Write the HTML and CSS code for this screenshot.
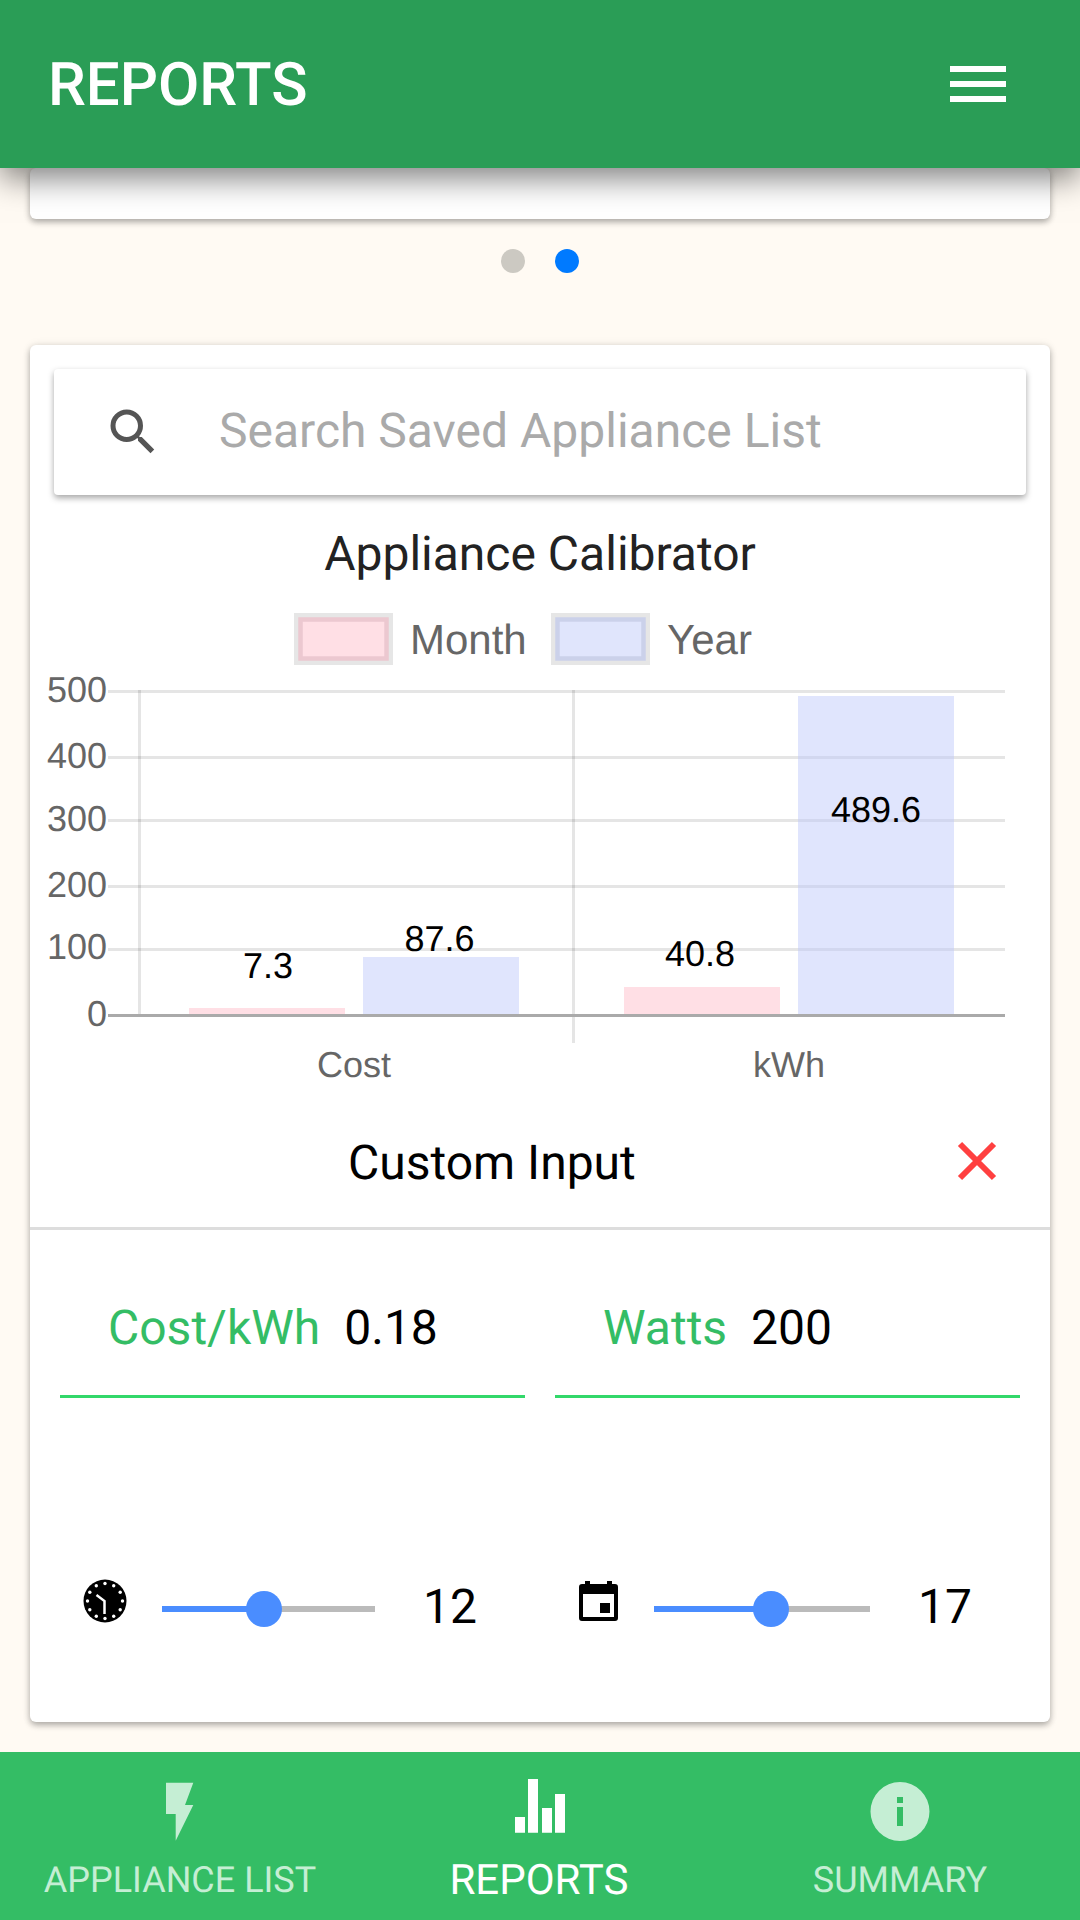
FILE: index.html
```html
<!DOCTYPE html>
<html lang="en">
<head>
  <meta charset="UTF-8">
  <meta name="viewport" content="width=device-width, initial-scale=1.0">
  <title>Reports</title>
  <link rel="stylesheet" href="styles.css">
</head>
<body>
  <header class="top-bar">
    <h1 class="top-title">REPORTS</h1>
    <div class="menu-icon"><span></span><span></span><span></span></div>
  </header>

  <main class="content">
    <div class="card card-stub"></div>
    <div class="dots"><span class="dot"></span><span class="dot dot-active"></span></div>

    <section class="card card-main">
      <div class="search-box">
        <svg class="search-icon" viewBox="0 0 24 24"><path d="M15.5 14h-.79l-.28-.27A6.471 6.471 0 0 0 16 9.5 6.5 6.5 0 1 0 9.5 16c1.61 0 3.09-.59 4.23-1.57l.27.28v.79l5 4.99L20.49 19l-4.99-5zm-6 0C7.01 14 5 11.99 5 9.5S7.01 5 9.5 5 14 7.01 14 9.5 11.99 14 9.5 14z"/></svg>
        <span class="search-text">Search Saved Appliance List</span>
      </div>

      <h2 class="chart-title">Appliance Calibrator</h2>

      <!-- viewBox uses page coordinates so the chart numbers stay readable -->
      <svg class="chart" viewBox="30 600 1020 500">
        <g class="legend-box">
          <rect class="swatch-edge" x="294" y="613" width="99" height="52"/>
          <rect class="swatch-pink" x="300.500" y="619.500" width="86" height="39"/>
          <rect class="swatch-edge" x="551" y="613" width="99" height="52"/>
          <rect class="swatch-blue" x="557.500" y="619.500" width="86" height="39"/>
        </g>
        <text class="legend-label" x="410" y="654">Month</text>
        <text class="legend-label" x="667" y="654">Year</text>

        <g class="grid">
          <line x1="108" y1="691.500" x2="1005" y2="691.500"/>
          <line x1="108" y1="757.500" x2="1005" y2="757.500"/>
          <line x1="108" y1="820.500" x2="1005" y2="820.500"/>
          <line x1="108" y1="886.500" x2="1005" y2="886.500"/>
          <line x1="108" y1="949.500" x2="1005" y2="949.500"/>
          <line x1="139.500" y1="690" x2="139.500" y2="1015"/>
          <line x1="573.500" y1="690" x2="573.500" y2="1043"/>
        </g>

        <rect class="bar-pink" x="189" y="1008" width="156" height="7"/>
        <rect class="bar-blue" x="363" y="957" width="156" height="58"/>
        <rect class="bar-pink" x="624" y="987" width="156" height="28"/>
        <rect class="bar-blue" x="798" y="696" width="156" height="319"/>
        <line class="axis" x1="108" y1="1015.500" x2="1005" y2="1015.500"/>

        <g class="tick-y">
          <text x="107" y="702">500</text>
          <text x="107" y="768">400</text>
          <text x="107" y="831">300</text>
          <text x="107" y="897">200</text>
          <text x="107" y="959">100</text>
          <text x="107" y="1026">0</text>
        </g>
        <g class="tick-x">
          <text x="354" y="1077">Cost</text>
          <text x="789" y="1077">kWh</text>
        </g>
        <g class="bar-value">
          <text x="268" y="978">7.3</text>
          <text x="439.500" y="951">87.6</text>
          <text x="700" y="966">40.8</text>
          <text x="876" y="822">489.6</text>
        </g>
      </svg>

      <div class="custom-head">
        <span class="custom-title">Custom Input</span>
        <svg class="close-icon" viewBox="0 0 40 40"><path d="M3 3l34 34M37 3L3 37"/></svg>
      </div>

      <div class="fields">
        <div class="field"><span class="field-label">Cost/kWh</span><span class="field-value">0.18</span></div>
        <div class="field"><span class="field-label">Watts</span><span class="field-value">200</span></div>
      </div>

      <div class="sliders">
        <svg class="clock-icon" viewBox="0 0 44 44">
          <circle cx="22" cy="22" r="21.500"/>
          <g class="clock-dots">
            <circle cx="22" cy="4.500" r="1.700"/><circle cx="30.700" cy="6.800" r="1.700"/>
            <circle cx="37.200" cy="13.300" r="1.700"/><circle cx="39.500" cy="22" r="1.700"/>
            <circle cx="37.200" cy="30.700" r="1.700"/><circle cx="30.700" cy="37.200" r="1.700"/>
            <circle cx="22" cy="39.500" r="1.700"/><circle cx="13.300" cy="37.200" r="1.700"/>
            <circle cx="6.800" cy="30.700" r="1.700"/><circle cx="4.500" cy="22" r="1.700"/>
            <circle cx="6.800" cy="13.300" r="1.700"/><circle cx="13.300" cy="6.800" r="1.700"/>
          </g>
          <path class="clock-hands" d="M13.500 16l8 6v13"/>
        </svg>
        <div class="track track-hours">
          <div class="track-fill" style="width: 48%"></div>
          <div class="thumb" style="left: 48%"></div>
        </div>
        <span class="slider-value">12</span>

        <svg class="event-icon" viewBox="0 0 40 40"><path fill-rule="evenodd" d="M6 0h5v3h17V0h5v3h3a3 3 0 0 1 3 3v31a3 3 0 0 1-3 3H3a3 3 0 0 1-3-3V6a3 3 0 0 1 3-3h3zM4 13v23h31V13zM21 22h10v10H21z"/></svg>
        <div class="track track-days">
          <div class="track-fill" style="width: 54%"></div>
          <div class="thumb" style="left: 54%"></div>
        </div>
        <span class="slider-value">17</span>
      </div>
    </section>
  </main>

  <nav class="bottom-bar">
    <div class="tab">
      <svg class="tab-icon" viewBox="0 0 60 64"><path d="M16 3.700H43.300L35 26H43.300L25.700 61.700V35H16z"/></svg>
      <span class="tab-label">APPLIANCE LIST</span>
    </div>
    <div class="tab tab-active">
      <svg class="tab-icon" viewBox="0 0 60 64"><path d="M5 38h10v15.700H5zM18 0h10v53.700H18zM32 29h10v24.700H32zM45 15h10v38.700H45z"/></svg>
      <span class="tab-label">REPORTS</span>
    </div>
    <div class="tab">
      <svg class="tab-icon" viewBox="0 0 60 64"><path fill-rule="evenodd" d="M30 3a29.500 29.500 0 1 0 0 59 29.500 29.500 0 0 0 0-59zM27 18h6v6h-6zM27 28h6v19h-6z"/></svg>
      <span class="tab-label">SUMMARY</span>
    </div>
  </nav>
</body>
</html>
```

FILE: styles.css
```css
* {
  box-sizing: border-box;
}

body {
  margin: 0;
  width: 1080px;
  height: 1920px;
  overflow: hidden;
  display: flex;
  flex-direction: column;
  font-family: Roboto, sans-serif;
  text-rendering: geometricPrecision;
  background-color: #fffaf3;
}

.top-bar {
  position: relative;
  z-index: 2;
  flex: 0 0 168px;
  display: flex;
  align-items: center;
  justify-content: space-between;
  padding: 0 74px 0 48px;
  background-color: #2a9d56;
  box-shadow: 0 10px 30px rgba(0, 0, 0, 0.5);
}

.top-title {
  margin: 0;
  font-size: 60px;
  font-weight: 500;
  color: white;
}

.menu-icon span {
  display: block;
  width: 56px;
  height: 6px;
  margin: 9px 0;
  background-color: white;
}

.content {
  flex: 1;
  padding: 0 30px;
}

.card {
  background-color: white;
  border-radius: 6px;
  box-shadow: 0 3px 6px rgba(0, 0, 0, 0.3), 0 0 10px rgba(0, 0, 0, 0.08);
}

.card-stub {
  height: 51px;
}

.dots {
  display: flex;
  justify-content: center;
  gap: 30px;
  margin: 30px 0 72px;
}

.dot {
  width: 24px;
  height: 24px;
  border-radius: 50%;
  background-color: #ccc9c2;
}

.dot-active {
  background-color: #007aff;
}

.card-main {
  height: 1377px;
  padding-top: 24px;
}

.search-box {
  display: flex;
  align-items: center;
  height: 126px;
  margin: 0 24px;
  padding-left: 49px;
  background-color: white;
  border-radius: 4px;
  box-shadow: 0 3px 6px rgba(0, 0, 0, 0.35);
}

.search-icon {
  width: 60px;
  height: 60px;
  fill: #555;
}

.search-text {
  margin: 0 0 3px 56px;
  font-size: 48px;
  color: #aaa;
}

.chart-title {
  margin: 0;
  height: 105px;
  padding-top: 33px;
  font-size: 48px;
  font-weight: 400;
  line-height: 52px;
  text-align: center;
  color: #222;
}

.chart {
  display: block;
  width: 1020px;
  height: 500px;
  font-family: "Liberation Sans", Arial, sans-serif;
}

.swatch-edge {
  fill: #e6e6e6;
}

.swatch-pink {
  fill: #ffdfe5;
  stroke: #ecc8d0;
  stroke-width: 4.500;
}

.swatch-blue {
  fill: #e0e5fc;
  stroke: #cbd1ea;
  stroke-width: 4.500;
}

.legend-label {
  font-size: 42px;
  fill: #666;
}

.grid line {
  stroke: rgba(0, 0, 0, 0.1);
  stroke-width: 3;
}

.axis {
  stroke: #aaa;
  stroke-width: 3;
}

.bar-pink {
  fill: #ffdfe5;
}

.bar-blue {
  fill: rgba(190, 200, 250, 0.48);
}

.tick-y text {
  font-size: 36px;
  fill: #666;
  text-anchor: end;
}

.tick-x text {
  font-size: 36px;
  fill: #666;
  text-anchor: middle;
}

.bar-value text {
  font-size: 36px;
  fill: black;
  text-anchor: middle;
}

.custom-head {
  display: flex;
  align-items: center;
  justify-content: space-between;
  height: 130px;
  padding: 0 53px 2px 318px;
  border-bottom: 3px solid #ddd;
}

.custom-title {
  font-size: 48px;
  color: black;
}

.close-icon {
  width: 40px;
  height: 40px;
  margin-bottom: 4px;
  fill: none;
  stroke: #ff4040;
  stroke-width: 6;
}

.fields {
  display: flex;
  gap: 30px;
  padding: 0 30px;
}

.field {
  flex: 1;
  display: flex;
  align-items: center;
  height: 168px;
  padding: 30px 0 0 48px;
  border-bottom: 3px solid #32d86a;
  font-size: 48px;
}

.field-label {
  margin-right: 24px;
  color: #34bd65;
}

.field-value {
  color: black;
}

.sliders {
  display: flex;
  align-items: center;
  padding: 180px 0 0 53px;
}

.clock-icon {
  flex: none;
  width: 44px;
  height: 44px;
  margin: 0 35px 16px 0;
}

.clock-dots circle {
  fill: white;
}

.clock-hands {
  fill: none;
  stroke: white;
  stroke-width: 2.500;
}

.event-icon {
  flex: none;
  width: 40px;
  height: 40px;
  margin: 0 35px 16px 102px;
}

.track {
  position: relative;
  flex: none;
  height: 6px;
  background-color: #bbb;
}

.track-hours {
  width: 213px;
}

.track-days {
  width: 216px;
}

.track-fill {
  height: 100%;
  background-color: #4a8dff;
}

.thumb {
  position: absolute;
  top: -15px;
  width: 36px;
  height: 36px;
  margin-left: -18px;
  border-radius: 50%;
  background-color: #4a8dff;
}

.slider-value {
  width: 54px;
  margin: 0 0 4px 48px;
  font-size: 48px;
  color: black;
}

.bottom-bar {
  flex: 0 0 168px;
  display: grid;
  grid-template-columns: 360px 360px 360px;
  background-color: #34bd65;
}

.tab {
  display: flex;
  flex-direction: column;
  align-items: center;
  padding-top: 27px;
  color: #c5eed4;
}

.tab-icon {
  width: 60px;
  height: 64px;
  fill: #c5eed4;
}

.tab-label {
  margin-top: 16px;
  font-size: 36px;
}

.tab-active {
  color: white;
}

.tab-active .tab-icon {
  fill: white;
}

.tab-active .tab-label {
  margin: 13px 2px 0 0;
  font-size: 42px;
}
```
